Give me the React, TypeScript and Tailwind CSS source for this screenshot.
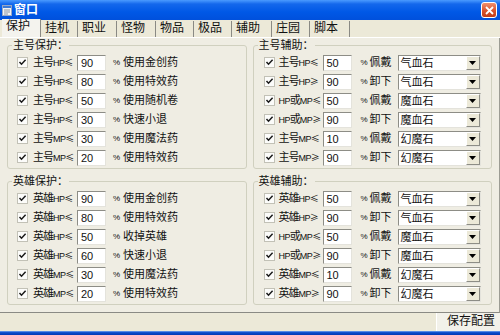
import { Fragment } from 'react';

type Row = { label: string; val: string; act: string; item?: string };

const tabs = [
  { name: "保护", w: "w-[39px]", on: true },
  { name: "挂机", w: "w-[37px]" },
  { name: "职业", w: "w-[39px]" },
  { name: "怪物", w: "w-[39px]" },
  { name: "物品", w: "w-[38px]" },
  { name: "极品", w: "w-[38px]" },
  { name: "辅助", w: "w-[40px]" },
  { name: "庄园", w: "w-[38px]" },
  { name: "脚本", w: "w-[40px]" },
];

const mainProtect: Row[] = [
  { label: "主号HP≤", val: "90", act: "使用金创药" },
  { label: "主号HP≤", val: "80", act: "使用特效药" },
  { label: "主号HP≤", val: "50", act: "使用随机卷" },
  { label: "主号HP≤", val: "30", act: "快速小退" },
  { label: "主号MP≤", val: "30", act: "使用魔法药" },
  { label: "主号MP≤", val: "20", act: "使用特效药" },
];

const heroProtect: Row[] = [
  { label: "英雄HP≤", val: "90", act: "使用金创药" },
  { label: "英雄HP≤", val: "80", act: "使用特效药" },
  { label: "英雄HP≤", val: "50", act: "收掉英雄" },
  { label: "英雄HP≤", val: "60", act: "快速小退" },
  { label: "英雄MP≤", val: "30", act: "使用魔法药" },
  { label: "英雄MP≤", val: "20", act: "使用特效药" },
];

const mainAssist: Row[] = [
  { label: "主号HP≤", val: "50", act: "佩戴", item: "气血石" },
  { label: "主号HP≥", val: "90", act: "卸下", item: "气血石" },
  { label: "HP或MP≤", val: "50", act: "佩戴", item: "魔血石" },
  { label: "HP或MP≥", val: "90", act: "卸下", item: "魔血石" },
  { label: "主号MP≤", val: "10", act: "佩戴", item: "幻魔石" },
  { label: "主号MP≥", val: "90", act: "卸下", item: "幻魔石" },
];

const heroAssist: Row[] = [
  { label: "英雄HP≤", val: "50", act: "佩戴", item: "气血石" },
  { label: "英雄HP≥", val: "90", act: "卸下", item: "气血石" },
  { label: "HP或MP≤", val: "50", act: "佩戴", item: "魔血石" },
  { label: "HP或MP≥", val: "90", act: "卸下", item: "魔血石" },
  { label: "英雄MP≤", val: "10", act: "佩戴", item: "幻魔石" },
  { label: "英雄MP≥", val: "90", act: "卸下", item: "幻魔石" },
];

function Label({ t }: { t: string }) {
  return (
    <>
      {t.split(/(HP|MP|≤|≥)/).filter(Boolean).map((p, i) =>
        p === "HP" || p === "MP" ? (
          <span key={i} className="text-[9px] tracking-[-0.6px]">{p}</span>
        ) : p === "≤" || p === "≥" ? (
          <span key={i} className="text-[9px] font-['Noto_Sans_CJK_SC',sans-serif]">{p}</span>
        ) : (
          <Fragment key={i}>{p}</Fragment>
        )
      )}
    </>
  );
}

function Check() {
  return (
    <svg width="11" height="11" viewBox="0 0 11 11" className="shrink-0">
      <rect x="0.5" y="0.5" width="10" height="10" fill="#fcfcfa" stroke="#c2c1b6" />
      <path d="M2.5 5 L4.5 7.2 L8.6 2.8" fill="none" stroke="#1a1a1a" strokeWidth="1.5" />
    </svg>
  );
}

function Box({ val, w }: { val: string; w: string }) {
  return (
    <div className={`${w} h-[16px] shrink-0 bg-white border border-t-[#8d8d86] border-l-[#8d8d86] border-r-[#e4e3dc] border-b-[#e4e3dc] pl-[3px] text-[11px] leading-[14px]`}>
      {val}
    </div>
  );
}

function Select({ v }: { v: string }) {
  return (
    <div className="ml-[4px] w-[83px] h-[16px] shrink-0 flex bg-white border border-t-[#8d8d86] border-l-[#8d8d86] border-r-[#e4e3dc] border-b-[#e4e3dc]">
      <div className="flex-1 pl-[2px] leading-[14px]">{v}</div>
      <div className="w-[14px] h-[14px] flex items-center justify-center bg-[#ece9d8] border border-t-white border-l-white border-r-[#8d8d86] border-b-[#8d8d86]">
        <svg width="7" height="4" viewBox="0 0 7 4"><path d="M0 0 H7 L3.5 4 Z" fill="#000" /></svg>
      </div>
    </div>
  );
}

function Group({ title, children }: { title: string; children: React.ReactNode }) {
  return (
    <fieldset className="h-[131px] border border-[#d0d0bf] rounded-[3px]">
      <legend className="ml-[4px] px-[1px] leading-[14px]">{title}</legend>
      <div className="pt-[1px] flex flex-col">{children}</div>
    </fieldset>
  );
}

export default function App() {
  return (
    <div className="w-[500px] h-[335px] flex flex-col bg-[#ece9d8] text-[11px] text-[#111] font-['Liberation_Sans','Noto_Sans_CJK_SC',sans-serif] overflow-hidden">
      {/* title bar */}
      <div className="h-[20px] shrink-0 flex items-center pl-[2px] pr-[3px] bg-[linear-gradient(to_bottom,#4a9bff_0%,#1468ec_20%,#0058e6_60%,#0050dc_100%)]">
        <svg width="10" height="11" viewBox="0 0 10 11">
          <rect x="0.5" y="0.5" width="9" height="10" fill="#f4f4f4" stroke="#9aa8c4" />
          <rect x="1" y="1" width="8" height="2" fill="#3d7ad6" />
          <path d="M2 5 H8 M2 7 H8 M2 9 H6" stroke="#8894a8" />
        </svg>
        <span className="ml-[2px] text-white text-[12px] font-bold leading-[14px]">窗口</span>
        <div className="ml-auto w-[16px] h-[16px] rounded-[3px] border border-white bg-[linear-gradient(to_bottom,#f0906e,#d8532e_55%,#c03c18)] flex items-center justify-center">
          <svg width="9" height="9" viewBox="0 0 9 9"><path d="M1 1 L8 8 M8 1 L1 8" stroke="#fff" strokeWidth="1.8" /></svg>
        </div>
      </div>

      {/* tabs */}
      <div className="h-[18px] shrink-0 flex items-end pl-[2px] border-b border-white">
        {tabs.map((t) => (
          <div
            key={t.name}
            className={`${t.w} ${t.on ? "h-[18px] bg-[#f4f3ee]" : "h-[16px]"} shrink-0 pl-[4px] text-[12px] leading-[15px] border-r border-r-[#8a8a84]`}
          >
            {t.name}
          </div>
        ))}
      </div>

      {/* panel */}
      <div className="h-[275px] shrink-0 grid grid-cols-2 gap-x-[6px] gap-y-[5px] content-start px-[7px] pb-[6px] bg-[#efede3] border-r border-b border-r-[#9c9c94] border-b-[#8a8a84]">
        <Group title="主号保护：">
          {mainProtect.map((r, i) => <LeftRow key={i} r={r} />)}
        </Group>
        <Group title="主号辅助：">
          {mainAssist.map((r, i) => <RightRow key={i} r={r} />)}
        </Group>
        <Group title="英雄保护：">
          {heroProtect.map((r, i) => <LeftRow key={i} r={r} />)}
        </Group>
        <Group title="英雄辅助：">
          {heroAssist.map((r, i) => <RightRow key={i} r={r} />)}
        </Group>
      </div>

      {/* bottom bar */}
      <div className="h-[18px] shrink-0 flex justify-end">
        <div className="w-[64px] h-[18px] border-l border-white bg-[#f2f1ea] pl-[10px] text-[12px] leading-[17px]">保存配置</div>
      </div>
      <div className="h-[4px] shrink-0 bg-[linear-gradient(to_bottom,#7aa8f0,#0a4ccc_40%,#0038b4)]" />
    </div>
  );
}

function LeftRow({ r }: { r: Row }) {
  return (
    <div className="h-[19px] flex items-center pl-[9px] whitespace-nowrap">
      <Check />
      <div className="ml-[5px] w-[44px] leading-[14px] tracking-[-1px]"><Label t={r.label} /></div>
      <Box val={r.val} w="w-[29px]" />
      <span className="ml-[7px] w-[6px] text-[8px]">%</span>
      <span className="ml-[4px]">{r.act}</span>
    </div>
  );
}

function RightRow({ r }: { r: Row }) {
  return (
    <div className="h-[19px] flex items-center pl-[10px] whitespace-nowrap">
      <Check />
      <div className="ml-[4px] w-[44px] leading-[14px] tracking-[-1px]"><Label t={r.label} /></div>
      <Box val={r.val} w="w-[29px]" />
      <span className="ml-[9px] w-[6px] text-[8px]">%</span>
      <span className="ml-[3px] w-[24px]">{r.act}</span>
      <Select v={r.item ?? ""} />
    </div>
  );
}
